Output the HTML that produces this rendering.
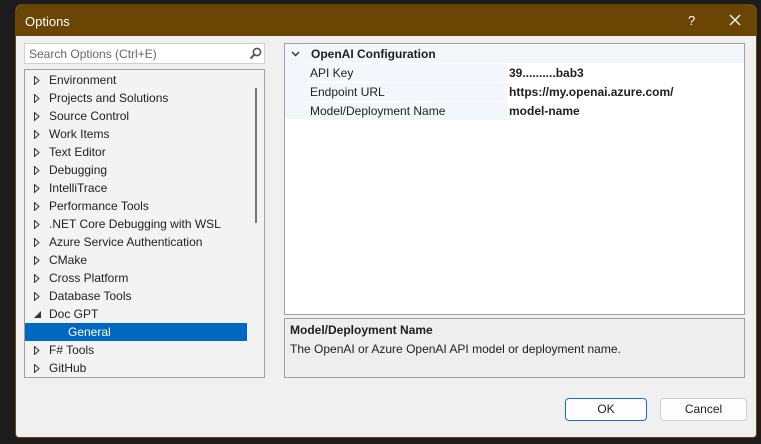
<!DOCTYPE html>
<html><head><meta charset="utf-8"><style>
*{margin:0;padding:0;box-sizing:border-box}
body{width:761px;height:444px;background:#1c1c1c;font-family:"Liberation Sans",sans-serif;font-size:12px;color:#1e1e1e;position:relative;overflow:hidden}
.dlg{position:absolute;left:15px;top:4px;width:742px;height:434px;background:#f0f0f0;border-radius:7px 7px 4px 4px;overflow:hidden;border:1px solid #6b4504}
.title{height:31px;background:#6b4504;color:#fff;font-size:13px;padding:9px 0 0 9px;position:relative}
.abs{position:absolute}
.search{left:8px;top:38px;width:241px;height:21px;background:#fff;border:1px solid #cfcfcf;color:#666;padding:3px 0 0 4px;font-size:12px}
.tree{left:8px;top:64px;width:241px;height:309px;border:1px solid #a0a0a0;background:#f3f3f3;overflow:hidden}
.it{position:absolute;left:0;height:18px;line-height:18px;width:222px;font-size:12px}
.it .t{position:absolute;left:24px}
.it svg{position:absolute;left:9px;top:5px}
.sel{background:#0068c0;color:#fff}
.grid{left:268px;top:38px;width:461px;height:272px;border:1px solid #a0a0a0;background:#fff}
.row{position:absolute;left:0;width:459px;height:18px;line-height:18px}
.desc{left:268px;top:313px;width:461px;height:60px;border:1px solid #a0a0a0;background:#eeeeee;padding:4px 5px}
.btn{height:23px;top:393px;border:1px solid #d0d0d0;background:#fdfdfd;border-radius:4px;text-align:center;line-height:21px;font-size:12px}
</style></head><body>
<div class="dlg">
<div class="title">Options
<span class="abs" style="left:672px;top:8px;font-size:13px">?</span>
<svg class="abs" style="left:713px;top:9px" width="12" height="12"><path d="M1 1L11 11M11 1L1 11" stroke="#fff" stroke-width="1.3"/></svg>
</div>
<div class="abs search">Search Options (Ctrl+E)
<svg class="abs" style="left:224px;top:3px" width="13" height="13"><circle cx="8" cy="5" r="3.6" fill="none" stroke="#555" stroke-width="1.6"/><path d="M5.5 7.5L1.5 11.5" stroke="#555" stroke-width="2"/></svg></div>
<div class="abs tree">
<div class="abs" style="left:230px;top:18px;width:2px;height:135px;background:#777"></div>
<div class="it" style="top:1px"><svg width="6" height="9"><path d="M.5 .5L5 4.5L.5 8.5Z" fill="none" stroke="#333"/></svg><span class="t">Environment</span></div>
<div class="it" style="top:19px"><svg width="6" height="9"><path d="M.5 .5L5 4.5L.5 8.5Z" fill="none" stroke="#333"/></svg><span class="t">Projects and Solutions</span></div>
<div class="it" style="top:37px"><svg width="6" height="9"><path d="M.5 .5L5 4.5L.5 8.5Z" fill="none" stroke="#333"/></svg><span class="t">Source Control</span></div>
<div class="it" style="top:55px"><svg width="6" height="9"><path d="M.5 .5L5 4.5L.5 8.5Z" fill="none" stroke="#333"/></svg><span class="t">Work Items</span></div>
<div class="it" style="top:73px"><svg width="6" height="9"><path d="M.5 .5L5 4.5L.5 8.5Z" fill="none" stroke="#333"/></svg><span class="t">Text Editor</span></div>
<div class="it" style="top:91px"><svg width="6" height="9"><path d="M.5 .5L5 4.5L.5 8.5Z" fill="none" stroke="#333"/></svg><span class="t">Debugging</span></div>
<div class="it" style="top:109px"><svg width="6" height="9"><path d="M.5 .5L5 4.5L.5 8.5Z" fill="none" stroke="#333"/></svg><span class="t">IntelliTrace</span></div>
<div class="it" style="top:127px"><svg width="6" height="9"><path d="M.5 .5L5 4.5L.5 8.5Z" fill="none" stroke="#333"/></svg><span class="t">Performance Tools</span></div>
<div class="it" style="top:145px"><svg width="6" height="9"><path d="M.5 .5L5 4.5L.5 8.5Z" fill="none" stroke="#333"/></svg><span class="t">.NET Core Debugging with WSL</span></div>
<div class="it" style="top:163px"><svg width="6" height="9"><path d="M.5 .5L5 4.5L.5 8.5Z" fill="none" stroke="#333"/></svg><span class="t">Azure Service Authentication</span></div>
<div class="it" style="top:181px"><svg width="6" height="9"><path d="M.5 .5L5 4.5L.5 8.5Z" fill="none" stroke="#333"/></svg><span class="t">CMake</span></div>
<div class="it" style="top:199px"><svg width="6" height="9"><path d="M.5 .5L5 4.5L.5 8.5Z" fill="none" stroke="#333"/></svg><span class="t">Cross Platform</span></div>
<div class="it" style="top:217px"><svg width="6" height="9"><path d="M.5 .5L5 4.5L.5 8.5Z" fill="none" stroke="#333"/></svg><span class="t">Database Tools</span></div>
<div class="it" style="top:235px"><svg width="7" height="7" style="top:6px"><path d="M7 0L7 7L0 7Z" fill="#333"/></svg><span class="t">Doc GPT</span></div>
<div class="it sel" style="top:253px"><span class="t" style="left:43px">General</span></div>
<div class="it" style="top:271px"><svg width="6" height="9"><path d="M.5 .5L5 4.5L.5 8.5Z" fill="none" stroke="#333"/></svg><span class="t">F# Tools</span></div>
<div class="it" style="top:289px"><svg width="6" height="9"><path d="M.5 .5L5 4.5L.5 8.5Z" fill="none" stroke="#333"/></svg><span class="t">GitHub</span></div>
</div>
<div class="abs grid">
<div class="abs" style="left:0;top:0;width:21px;height:75px;background:#f3f6fa"></div>
<div class="row" style="top:1px;background:#f3f6fa;font-weight:bold"><svg class="abs" style="left:6px;top:6px" width="9" height="6"><path d="M1 1L4.5 4.5L8 1" fill="none" stroke="#333" stroke-width="1.4"/></svg><span class="abs" style="left:26px">OpenAI Configuration</span></div>
<div class="row" style="top:20px"><span class="abs" style="left:21px;width:201px;height:18px;background:#f3f6fa;padding-left:4px">API Key</span><span class="abs" style="left:224px;font-weight:bold">39..........bab3</span></div>
<div class="row" style="top:39px"><span class="abs" style="left:21px;width:201px;height:18px;background:#f3f6fa;padding-left:4px">Endpoint URL</span><span class="abs" style="left:224px;font-weight:bold">https://my.openai.azure.com/</span></div>
<div class="row" style="top:58px"><span class="abs" style="left:21px;width:201px;height:18px;background:#f3f6fa;padding-left:4px">Model/Deployment Name</span><span class="abs" style="left:224px;font-weight:bold">model-name</span></div>
</div>
<div class="abs desc"><div style="font-weight:bold">Model/Deployment Name</div><div style="margin-top:5px">The OpenAI or Azure OpenAI API model or deployment name.</div></div>
<div class="abs btn" style="left:549px;width:82px;border-color:#1a6fc4;border-width:1px">OK</div>
<div class="abs btn" style="left:644px;width:87px">Cancel</div>
</div>
</body></html>
